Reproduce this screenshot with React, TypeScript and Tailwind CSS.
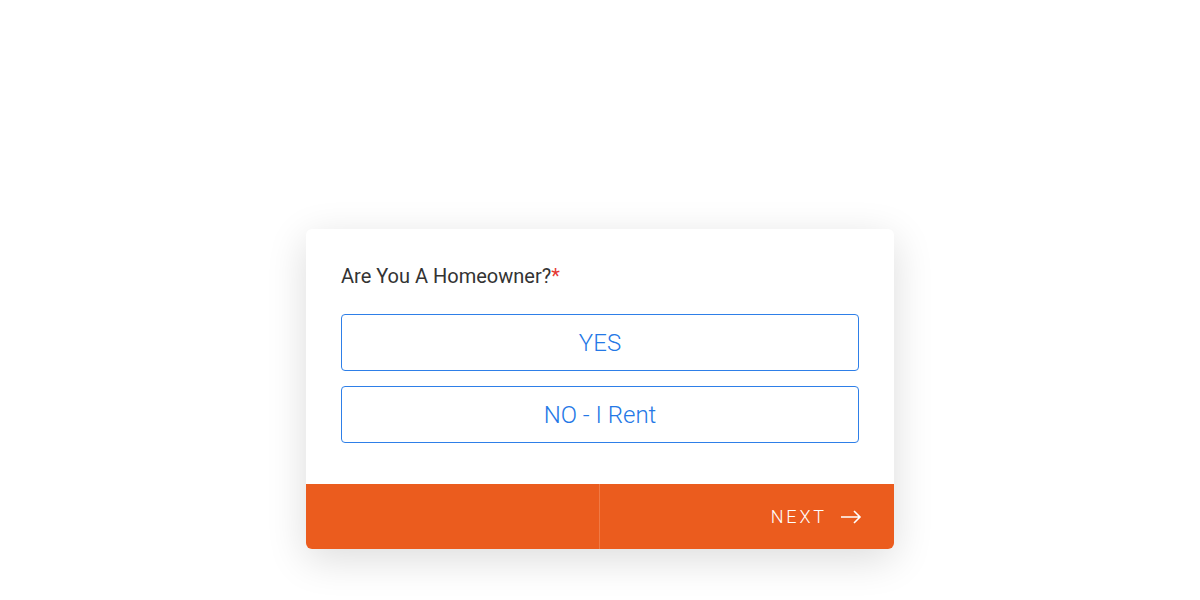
export default function App() {
  return (
    <div
      className="flex h-[600px] w-full items-start justify-center bg-white pt-[229px]"
      style={{ fontFamily: "Roboto, 'Liberation Sans', sans-serif" }}
    >
      <div className="w-[588px] overflow-hidden rounded-[6px] bg-white shadow-[0_10px_40px_rgba(0,0,0,0.14)]">
        <div className="px-[35px] pt-[34px] pb-[41px]">
          <div className="mb-[25px] text-[20px] leading-[26px] text-[#333]">
            Are You A Homeowner?<span className="text-[#e53935]">*</span>
          </div>
          <div className="flex flex-col gap-[15px]">
            <button className="h-[57px] w-full rounded-[4px] border border-[#2e7fe8] bg-white text-[24px] font-light text-[#2478e6]">
              YES
            </button>
            <button className="h-[57px] w-full rounded-[4px] border border-[#2e7fe8] bg-white text-[24px] font-light text-[#2478e6]">
              NO - I Rent
            </button>
          </div>
        </div>
        <div className="grid h-[65px] grid-cols-2 bg-[#eb5c1e]">
          <div className="border-r border-[#f07a45]" />
          <button className="flex items-center justify-end gap-[13px] pr-[32px] text-white">
            <span className="text-[18px] font-light tracking-[0.16em]">NEXT</span>
            <svg width="22" height="14" viewBox="0 0 22 14" fill="none" stroke="white" strokeWidth="1.6">
              <path d="M1 7h19M14 1l6 6-6 6" />
            </svg>
          </button>
        </div>
      </div>
    </div>
  );
}
